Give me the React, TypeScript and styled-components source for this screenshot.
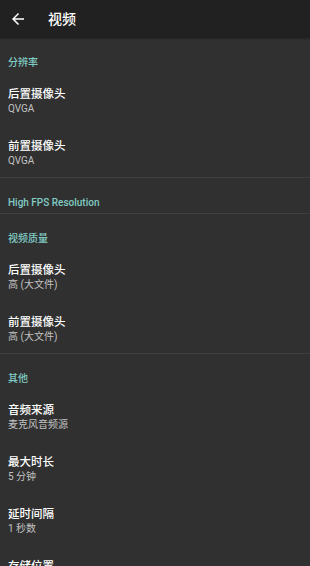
import React from "react";
import styled, { createGlobalStyle } from "styled-components";

const GlobalStyle = createGlobalStyle`
  html, body {
    margin: 0;
    padding: 0;
    background: #303030;
  }
  body {
    font-family: Roboto, "Noto Sans CJK SC", sans-serif;
    -webkit-font-smoothing: antialiased;
  }
`;

const Screen = styled.div`
  width: 310px;
  height: 566px;
  overflow: hidden;
  background: #303030;
  display: flex;
  flex-direction: column;
`;

const Toolbar = styled.header`
  height: 38px;
  flex: none;
  background: #212121;
  display: flex;
  align-items: center;
  padding-left: 9px;
  box-shadow: 0 1px 2px rgba(0, 0, 0, 0.25);
`;

const BackButton = styled.button`
  width: 18px;
  height: 18px;
  padding: 0;
  border: 0;
  background: none;
  display: flex;
  align-items: center;
  justify-content: center;
  color: #fff;
`;

const Title = styled.h1`
  margin: 0 0 0 21px;
  font-size: 14px;
  line-height: 18px;
  font-weight: 500;
  color: #fff;
`;

const List = styled.div`
  display: flex;
  flex-direction: column;
`;

const Category = styled.section<{ $divider?: boolean }>`
  border-bottom: ${({ $divider }) => ($divider ? "1px solid #3f3f3f" : "none")};
`;

const CategoryTitle = styled.div`
  padding: 18px 8px 3px;
  font-size: 10px;
  line-height: 14px;
  font-weight: 500;
  color: #80cbc4;
`;

const Item = styled.div`
  padding: 13px 8px 9px;
  display: flex;
  flex-direction: column;
`;

const ItemTitle = styled.div`
  font-size: 11.5px;
  line-height: 16px;
  font-weight: 500;
  color: #fff;
`;

const ItemSummary = styled.div`
  font-size: 10px;
  line-height: 14px;
  color: #c2c2c2;
`;

type Pref = { title: string; summary: string };
type Group = { title: string; items: Pref[]; divider: boolean };

const groups: Group[] = [
  {
    title: "分辨率",
    divider: true,
    items: [
      { title: "后置摄像头", summary: "QVGA" },
      { title: "前置摄像头", summary: "QVGA" },
    ],
  },
  { title: "High FPS Resolution", divider: true, items: [] },
  {
    title: "视频质量",
    divider: true,
    items: [
      { title: "后置摄像头", summary: "高 (大文件)" },
      { title: "前置摄像头", summary: "高 (大文件)" },
    ],
  },
  {
    title: "其他",
    divider: false,
    items: [
      { title: "音频来源", summary: "麦克风音频源" },
      { title: "最大时长", summary: "5 分钟" },
      { title: "延时间隔", summary: "1 秒数" },
      { title: "存储位置", summary: "" },
    ],
  },
];

function BackArrow() {
  return (
    <svg width="18" height="18" viewBox="0 0 24 24" fill="currentColor">
      <path d="M20 11H7.83l5.59-5.59L12 4l-8 8 8 8 1.41-1.41L7.83 13H20v-2z" />
    </svg>
  );
}

export default function App() {
  return (
    <>
      <GlobalStyle />
      <Screen>
        <Toolbar>
          <BackButton aria-label="返回">
            <BackArrow />
          </BackButton>
          <Title>视频</Title>
        </Toolbar>
        <List>
          {groups.map((g) => (
            <Category key={g.title} $divider={g.divider}>
              <CategoryTitle>{g.title}</CategoryTitle>
              {g.items.map((it) => (
                <Item key={it.title}>
                  <ItemTitle>{it.title}</ItemTitle>
                  {it.summary && <ItemSummary>{it.summary}</ItemSummary>}
                </Item>
              ))}
            </Category>
          ))}
        </List>
      </Screen>
    </>
  );
}
